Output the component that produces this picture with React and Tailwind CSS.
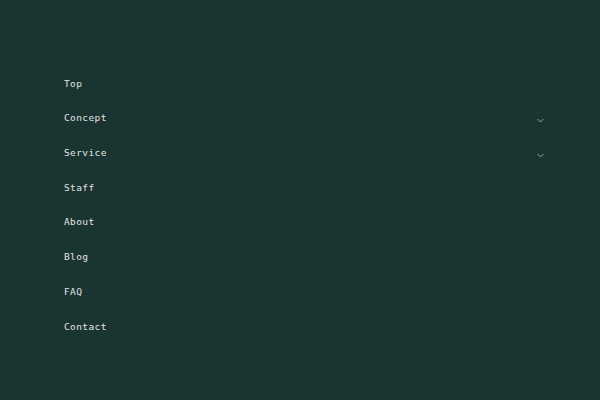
export default function App() {
  const items = [
    { label: "Top" },
    { label: "Concept", sub: true },
    { label: "Service", sub: true },
    { label: "Staff" },
    { label: "About" },
    { label: "Blog" },
    { label: "FAQ" },
    { label: "Contact" },
  ];

  return (
    <div className="w-[600px] h-[400px] bg-[#1a3431] pl-[64px] pr-[56px] pt-[66px]">
      <ul className="flex flex-col">
        {items.map((item) => (
          <li
            key={item.label}
            className="h-[34.7px] flex items-center justify-between text-[9.5px] tracking-[0.4px] text-[#e4e4e4] font-['DejaVu_Sans_Mono',monospace]"
          >
            <span className="mt-[1px]">{item.label}</span>
            {item.sub && (
              <svg width="7" height="5" viewBox="0 0 7 5" className="mt-[5px]">
                <path d="M0.5 1 L3.5 4 L6.5 1" fill="none" stroke="#9aa6a3" strokeWidth="1" />
              </svg>
            )}
          </li>
        ))}
      </ul>
    </div>
  );
}
